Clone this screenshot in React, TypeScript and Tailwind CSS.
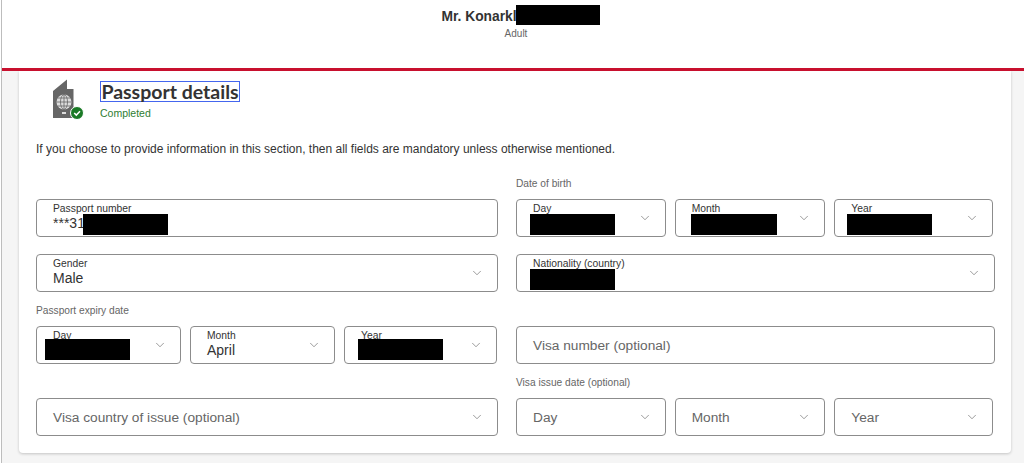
import { ChevronDown } from "lucide-react";

function Blackout({ className }: { className: string }) {
  return <div className={`absolute bg-black ${className}`} />;
}

function PassportIcon() {
  return (
    <svg width="34" height="42" viewBox="0 0 34 42" className="shrink-0">
      <path d="M2 13 L16 1.5 V11 H22.5 V40 H2 Z" fill="#666" />
      <path d="M17.5 7 V11" stroke="#fff" strokeWidth="1" />
      <circle cx="13" cy="24" r="7.5" fill="#ddd" />
      <g stroke="#666" strokeWidth="0.8" fill="none">
        <ellipse cx="13" cy="24" rx="3.5" ry="7.5" />
        <path d="M13 16.5 V31.5 M5.5 24 H20.5 M6.5 20 H19.5 M6.5 28 H19.5" />
      </g>
      <rect x="11" y="34" width="4" height="2" fill="#ddd" />
      <circle cx="26" cy="35" r="6.5" fill="#1a7a26" stroke="#fff" strokeWidth="1" />
      <path d="M23.2 35 L25.3 37.1 L29 33.3" stroke="#fff" strokeWidth="1.5" fill="none" />
    </svg>
  );
}

function Field({
  label,
  value,
  placeholder,
  chevron = true,
  className = "",
  children,
}: {
  label?: string;
  value?: string;
  placeholder?: string;
  chevron?: boolean;
  className?: string;
  children?: React.ReactNode;
}) {
  return (
    <div
      className={`relative flex h-[38px] items-center justify-between rounded-[4px] border border-[#8c8c8c] bg-white pl-4 pr-[13px] ${className}`}
    >
      {placeholder ? (
        <span className="pt-[2px] text-[13.7px] text-[#666]">{placeholder}</span>
      ) : (
        <div className="flex flex-col pb-[2px]">
          <span className="mt-px text-[10.3px] leading-[12px] text-[#333]">{label}</span>
          <span className="h-[17px] text-[14px] leading-[17px] text-[#333]">{value}</span>
        </div>
      )}
      {chevron && <ChevronDown size={14} strokeWidth={1} className="text-[#555]" />}
      {children}
    </div>
  );
}

function GroupLabel({ children, className = "" }: { children: string; className?: string }) {
  return <div className={`text-[10.2px] leading-[14px] text-[#666] ${className}`}>{children}</div>;
}

export default function App() {
  return (
    <div
      className="h-[463px] w-[1024px] overflow-hidden bg-white pl-px"
      style={{ fontFamily: '"Liberation Sans", Arial, sans-serif' }}
    >
      <div className="h-full border-l border-[#bdbdbd] bg-[#f5f5f5]">
        {/* HEADER */}
        <header className="relative flex h-[71px] flex-col items-center border-b-[3px] border-[#c8102e] bg-white pl-[6px] pt-[9px]">
          <div className="pr-[2px] text-[13.8px] font-bold leading-[15px] text-[#333]">
            Mr. Konarkl<span className="inline-block w-[72px]" />
          </div>
          <div className="mt-[3px] text-[10px] leading-[14px] text-[#666]">Adult</div>
          <Blackout className="left-[514px] top-[5px] h-[20px] w-[84px]" />
        </header>

        {/* CARD */}
        <main className="ml-[17px] h-[382px] w-[992px] rounded-b-[4px] bg-white pl-[17px] pr-4 shadow-[0_1px_3px_rgba(0,0,0,0.2)]">
          <section className="flex pl-[15px] pt-[7px]">
            <PassportIcon />
            <div className="ml-[15px] pt-[3px]">
              <h1
                className="w-[140px] whitespace-nowrap border border-[#4466ee] text-center text-[19.5px] font-bold leading-[19px] text-[#333]"
                style={{ fontFamily: "Lato, sans-serif" }}
              >
                Passport details
              </h1>
              <div className="mt-[4px] text-[10.5px] leading-[14px] text-[#2e7d32]">Completed</div>
            </div>
          </section>

          <p className="mt-[22px] text-[12px] leading-[14px] text-[#333]">
            If you choose to provide information in this section, then all fields are mandatory
            unless otherwise mentioned.
          </p>

          <section className="mt-[20px] grid grid-cols-[462px_479px] gap-x-[18px]">
            {/* LEFT */}
            <div className="flex flex-col pt-[23px]">
              <Field label="Passport number" value="***31" chevron={false}>
                <Blackout className="left-[46px] top-[14px] h-[21px] w-[85px]" />
              </Field>
              <Field label="Gender" value="Male" className="mt-[17px]" />
              <GroupLabel className="mb-[8px] mt-[12px]">Passport expiry date</GroupLabel>
              <div className="flex gap-[9px]">
                <Field label="Day" className="w-[145px]">
                  <Blackout className="left-[8px] top-[12px] h-[21px] w-[85px]" />
                </Field>
                <Field label="Month" value="April" className="w-[145px]" />
                <Field label="Year" className="w-[153px]">
                  <Blackout className="left-[13px] top-[12px] h-[21px] w-[85px]" />
                </Field>
              </div>
              <Field placeholder="Visa country of issue (optional)" className="mt-[34px]" />
            </div>

            {/* RIGHT */}
            <div className="flex flex-col">
              <GroupLabel className="mb-[8px] mt-px">Date of birth</GroupLabel>
              <div className="flex w-[477px] gap-[9px]">
                <Field label="Day" className="w-[150px]">
                  <Blackout className="left-[13px] top-[14px] h-[21px] w-[85px]" />
                </Field>
                <Field label="Month" className="w-[151px]">
                  <Blackout className="left-[15px] top-[14px] h-[21px] w-[86px]" />
                </Field>
                <Field label="Year" className="w-[159px]">
                  <Blackout className="left-[12px] top-[14px] h-[21px] w-[85px]" />
                </Field>
              </div>
              <Field label="Nationality (country)" className="mt-[17px]">
                <Blackout className="left-[13px] top-[14px] h-[21px] w-[85px]" />
              </Field>
              <Field placeholder="Visa number (optional)" chevron={false} className="mt-[34px]" />
              <GroupLabel className="mb-[8px] mt-[12px]">Visa issue date (optional)</GroupLabel>
              <div className="flex w-[477px] gap-[9px]">
                <Field placeholder="Day" className="w-[150px]" />
                <Field placeholder="Month" className="w-[151px]" />
                <Field placeholder="Year" className="w-[159px]" />
              </div>
            </div>
          </section>
        </main>
      </div>
    </div>
  );
}
